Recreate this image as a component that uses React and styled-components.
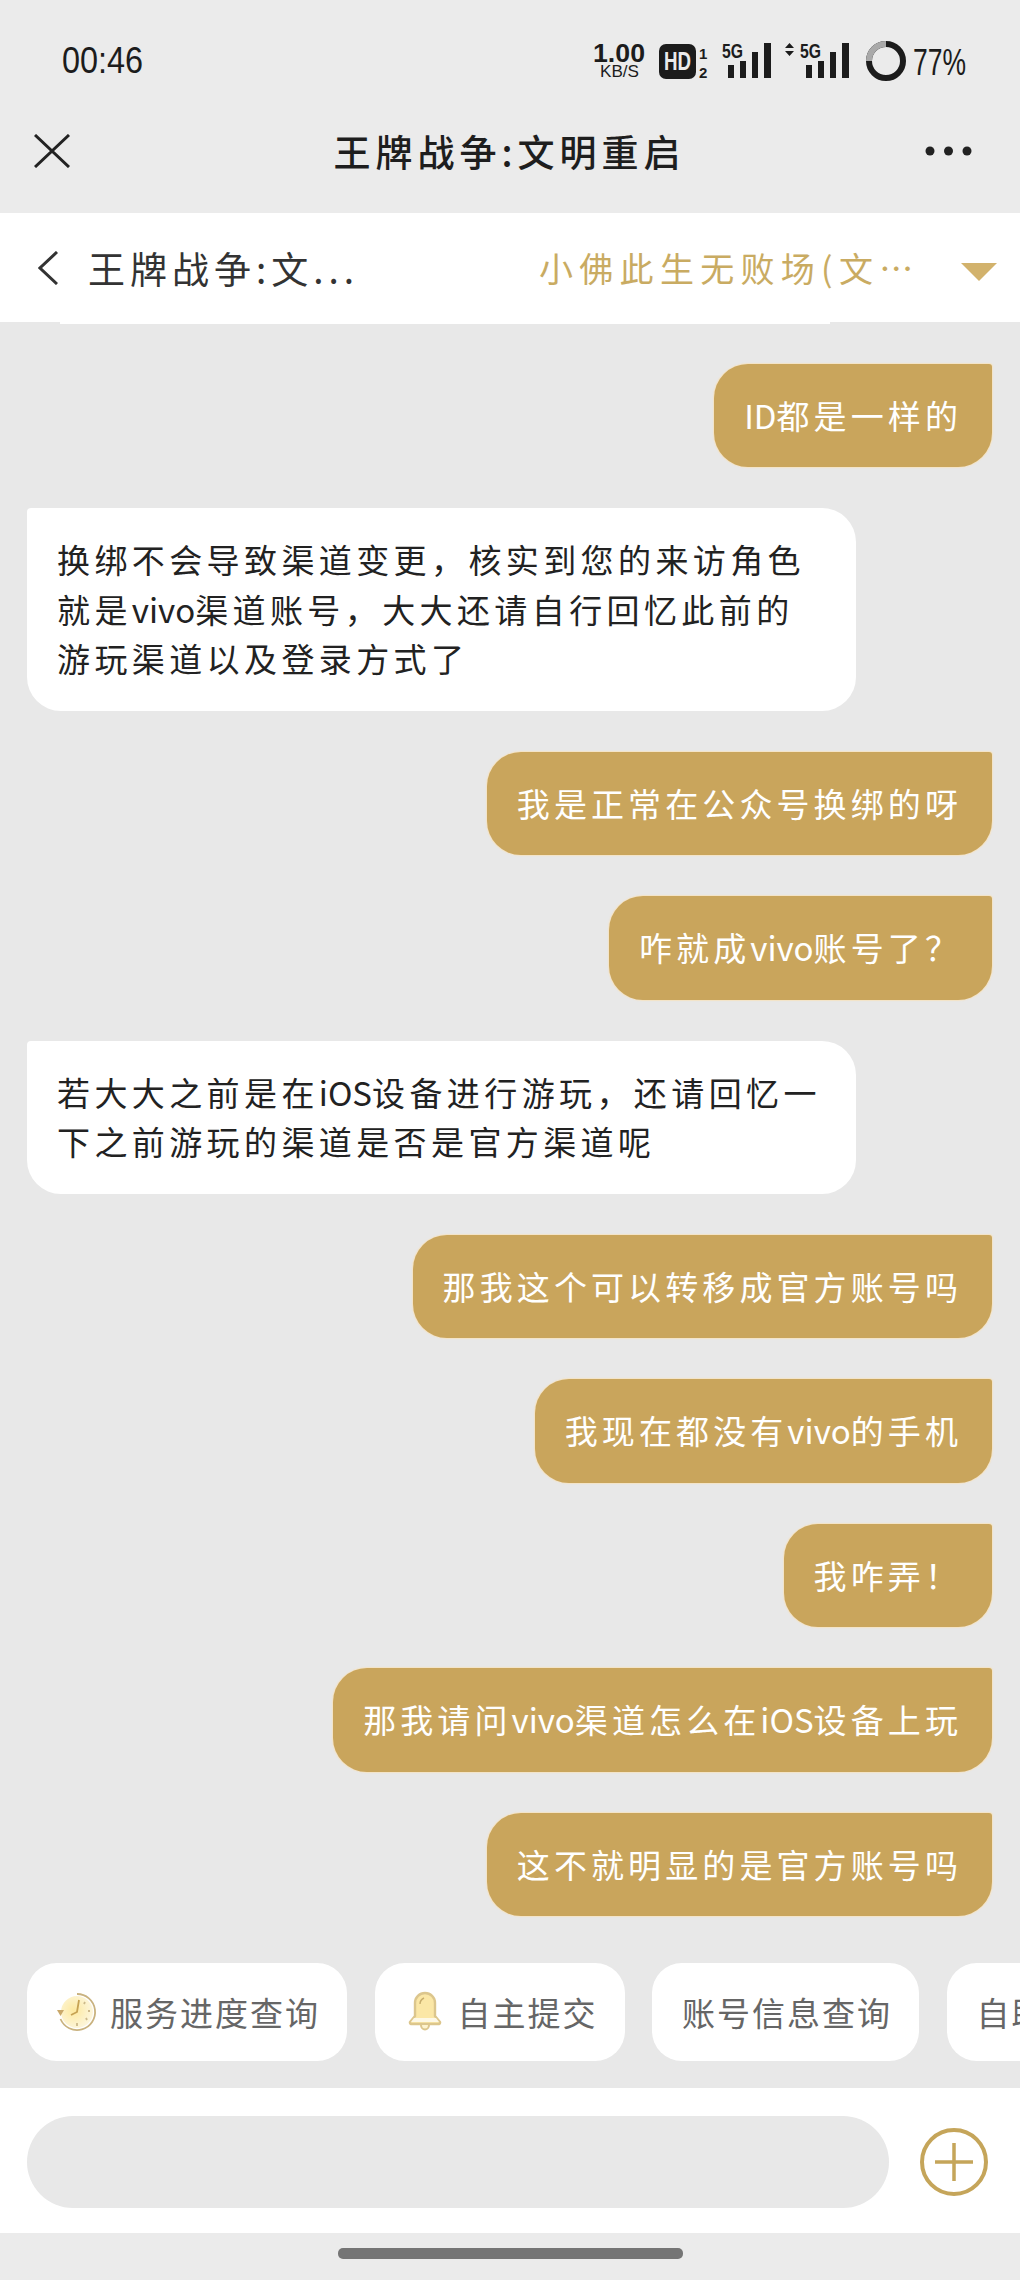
import styled, { createGlobalStyle } from "styled-components";

const GlobalStyle = createGlobalStyle`
  html, body {
    margin: 0;
    padding: 0;
    background: #e8e8e8;
  }
  body {
    font-family: "Noto Sans CJK SC", "Liberation Sans", sans-serif;
  }
`;

const Screen = styled.div`
  width: 1020px;
  height: 2280px;
  display: flex;
  flex-direction: column;
  overflow: hidden;
  background: #e8e8e8;
`;

const StatusBar = styled.div`
  flex: none;
  height: 100px;
  box-sizing: border-box;
  padding: 30px 28px 0 62px;
  display: flex;
  justify-content: space-between;
  align-items: flex-start;
  background: #ebebeb;
  color: #1c1c1c;
`;

const Time = styled.span`
  margin-top: 11px;
  font-family: "Liberation Sans", sans-serif;
  font-size: 36px;
  line-height: 40px;
  transform: scaleX(0.9);
  transform-origin: left center;
`;

const StatusIcons = styled.svg`
  display: block;
`;

const TitleBar = styled.div`
  flex: none;
  height: 113px;
  box-sizing: border-box;
  padding: 0 48px 12px 34px;
  display: flex;
  align-items: center;
  justify-content: space-between;
  background: #ebebeb;
`;

const Title = styled.h1`
  margin: 0 0 0 24px;
  font-size: 37px;
  font-weight: 500;
  letter-spacing: 5px;
  line-height: 50px;
  color: #1e1e1e;
`;

const PickerBar = styled.div`
  flex: none;
  height: 109px;
  box-sizing: border-box;
  padding: 0 22px 0 38px;
  display: flex;
  align-items: center;
  background: #fff;
`;

const GameName = styled.span`
  margin-left: 30px;
  width: 451px;
  font-size: 37px;
  letter-spacing: 5px;
  line-height: 50px;
  color: #333;
`;

const RoleName = styled.span`
  width: 380px;
  margin-right: 42px;
  font-size: 34px;
  letter-spacing: 6.3px;
  line-height: 50px;
  white-space: nowrap;
  color: #c9ab62;
`;

const Caret = styled.div`
  width: 0;
  height: 0;
  margin-top: 8px;
  border-left: 18px solid transparent;
  border-right: 18px solid transparent;
  border-top: 18px solid #d2b26c;
`;

// bottom edge of the bubble scrolled away under the header
const ScrolledEdge = styled.div`
  flex: none;
  height: 2px;
  margin: 0 190px 0 60px;
  background: #fff;
`;

const Messages = styled.div`
  flex: 1;
  min-height: 0;
  box-sizing: border-box;
  padding: 39.5px 28px 0 27px;
  display: flex;
  flex-direction: column;
  gap: 41px;
  background: #e8e8e8;
`;

const Bubble = styled.div`
  flex: none;
  align-self: ${(p) => (p.$mine ? "flex-end" : "flex-start")};
  box-sizing: border-box;
  width: ${(p) => (p.$mine ? "auto" : "829px")};
  padding: 27px 30px;
  font-size: 33px;
  letter-spacing: ${(p) => (p.$mine ? "4.1px" : "4.4px")};
  line-height: 49.5px;
  white-space: nowrap;
  color: ${(p) => (p.$mine ? "#fff" : "#222")};
  background: ${(p) => (p.$mine ? "#c9a55c" : "#fff")};
  border-radius: ${(p) => (p.$mine ? "34px 3px 34px 34px" : "4px 34px 34px 34px")};
  box-shadow: ${(p) => (p.$mine ? "0 0 1px 1px rgba(248, 226, 186, 0.75)" : "none")};
`;

const Line = styled.div``;

const Latin = styled.span`
  letter-spacing: 0;
`;

const ChipRow = styled.div`
  flex: none;
  height: 98px;
  margin-top: 46px;
  padding-left: 27px;
  display: flex;
  gap: 27.5px;
  overflow: hidden;
`;

const Chip = styled.div`
  flex: none;
  height: 98px;
  box-sizing: border-box;
  padding: 0 27px 0 ${(p) => p.$left || 30}px;
  display: flex;
  align-items: center;
  gap: ${(p) => p.$gap || 12}px;
  border-radius: 30px;
  background: #fff;
  font-size: 33px;
  letter-spacing: 2px;
  color: #666;
  white-space: nowrap;
`;

const InputBar = styled.div`
  flex: none;
  margin-top: 27px;
  height: 145px;
  box-sizing: border-box;
  padding: 28px 32px 0 27px;
  display: flex;
  justify-content: space-between;
  background: #fff;
`;

const InputPill = styled.div`
  width: 862px;
  height: 92px;
  border-radius: 46px;
  background: #e8e8e8;
`;

const PlusButton = styled.svg`
  display: block;
  margin-top: 12px;
`;

const HomeArea = styled.div`
  flex: none;
  height: 47px;
  display: flex;
  justify-content: center;
  padding-top: 15px;
  box-sizing: border-box;
  background: #ebebeb;
`;

const HomeBar = styled.div`
  width: 345px;
  height: 11px;
  border-radius: 5px;
  background: #757575;
`;

const StatusText = styled.text`
  font-family: "Liberation Sans", sans-serif;
  fill: #1c1c1c;
`;

const messages = [
  { mine: true, lines: ["ID都是一样的"] },
  { lines: ["换绑不会导致渠道变更，核实到您的来访角色", "就是vivo渠道账号，大大还请自行回忆此前的", "游玩渠道以及登录方式了"] },
  { mine: true, lines: ["我是正常在公众号换绑的呀"] },
  { mine: true, lines: ["咋就成vivo账号了？"] },
  { lines: ["若大大之前是在iOS设备进行游玩，还请回忆一", "下之前游玩的渠道是否是官方渠道呢"] },
  { mine: true, lines: ["那我这个可以转移成官方账号吗"] },
  { mine: true, lines: ["我现在都没有vivo的手机"] },
  { mine: true, lines: ["我咋弄！"] },
  { mine: true, lines: ["那我请问vivo渠道怎么在iOS设备上玩"] },
  { mine: true, lines: ["这不就明显的是官方账号吗"] },
];

// latin words sit tighter than the CJK around them
const withLatin = (text) =>
  text.split(/([A-Za-z]+)/).map((part, i) =>
    /^[A-Za-z]+$/.test(part) ? <Latin key={i}>{part}</Latin> : part
  );

const Signal = ({ x }) => (
  <>
    <rect x={x} y="24" width="6" height="13" fill="#1c1c1c" />
    <rect x={x + 12} y="20" width="6" height="17" fill="#1c1c1c" />
    <rect x={x + 24} y="11" width="6" height="26" fill="#1c1c1c" />
    <rect x={x + 36} y="2" width="7" height="35" fill="#1c1c1c" />
  </>
);

const StatusGroup = () => (
  <StatusIcons width="404" height="56" viewBox="588 30 404 56">
    <g transform="translate(593 41)">
      <StatusText x="0" y="21" fontSize="26" fontWeight="700" textLength="52" lengthAdjust="spacingAndGlyphs">1.00</StatusText>
      <StatusText x="7" y="36" fontSize="17" textLength="39" lengthAdjust="spacingAndGlyphs">KB/S</StatusText>
      <rect x="66" y="3" width="37" height="35" rx="7" fill="#1c1c1c" />
      <text x="71" y="29" fontSize="25" fontWeight="700" fill="#ebebeb" fontFamily="Liberation Sans" textLength="27" lengthAdjust="spacingAndGlyphs">HD</text>
      <StatusText x="106" y="18" fontSize="15" fontWeight="700">1</StatusText>
      <StatusText x="106" y="37" fontSize="15" fontWeight="700">2</StatusText>
      <StatusText x="129" y="17" fontSize="21" fontWeight="700" textLength="21" lengthAdjust="spacingAndGlyphs">5G</StatusText>
      <Signal x={135} />
      <path d="M192 7l4.5-5 4.5 5zM192 10h9l-4.5 5z" fill="#1c1c1c" />
      <StatusText x="207" y="17" fontSize="21" fontWeight="700" textLength="21" lengthAdjust="spacingAndGlyphs">5G</StatusText>
      <Signal x={213} />
      <circle cx="293" cy="20" r="17" fill="none" stroke="#1c1c1c" strokeWidth="6" />
      <path d="M276 20A17 17 0 0 1 293 3" fill="none" stroke="#a9a9a9" strokeWidth="6" />
      <StatusText x="320" y="34" fontSize="36" textLength="53" lengthAdjust="spacingAndGlyphs">77%</StatusText>
    </g>
  </StatusIcons>
);

const ClockIcon = () => (
  <svg width="42" height="42" viewBox="0 0 42 42">
    <defs>
      <radialGradient id="clockFill" cx="0.4" cy="0.45" r="0.6">
        <stop offset="0" stopColor="#fde9a0" />
        <stop offset="1" stopColor="#fdf6dc" />
      </radialGradient>
    </defs>
    <circle cx="21" cy="21" r="16" fill="url(#clockFill)" />
    <path d="M21 3a18 18 0 1 1-16.5 25" fill="none" stroke="#c9b27f" strokeWidth="1.8" />
    <path d="M1 19l3.5 6 3.5-6z" fill="#c9a86a" />
    <path d="M23 9l-2 12-6 3" fill="none" stroke="#c6a253" strokeWidth="1.8" />
    <path d="M29 11l-1 2M34 20h-2M31 29l-1-2M21 35v-3" stroke="#cdb98a" strokeWidth="1.8" />
  </svg>
);

const BellIcon = () => (
  <svg width="36" height="42" viewBox="0 0 36 42">
    <path d="M8 12a10 10 0 0 1 20 0v13l5 6a1.5 1.5 0 0 1-1 2H4a1.5 1.5 0 0 1-1-2l5-6z" fill="#fbe7a6" stroke="#dcc68d" strokeWidth="2.4" />
    <path d="M7 27h22l3 4H4z" fill="#fdf8e6" />
    <path d="M13 13c0-3 2-5 4-6" fill="none" stroke="#c7ad6c" strokeWidth="1.4" />
    <path d="M14 34a4 4.5 0 0 0 8 0" fill="#fdf3cf" stroke="#dcc68d" strokeWidth="2" />
  </svg>
);

const App = () => (
  <Screen>
    <GlobalStyle />
    <StatusBar>
      <Time>00:46</Time>
      <StatusGroup />
    </StatusBar>
    <TitleBar>
      <svg width="36" height="34" viewBox="0 0 36 34">
        <path d="M1 1l34 32M35 1L1 33" stroke="#222" strokeWidth="3" fill="none" />
      </svg>
      <Title>王牌战争:文明重启</Title>
      <svg width="47" height="10" viewBox="0 0 47 10">
        <circle cx="5" cy="5" r="4.5" fill="#222" />
        <circle cx="23.5" cy="5" r="4.5" fill="#222" />
        <circle cx="42" cy="5" r="4.5" fill="#222" />
      </svg>
    </TitleBar>
    <PickerBar>
      <svg width="20" height="34" viewBox="0 0 20 34">
        <path d="M19 1L2 17l17 16" stroke="#333" strokeWidth="3" fill="none" />
      </svg>
      <GameName>王牌战争:文...</GameName>
      <RoleName>小佛此生无败场(文…</RoleName>
      <Caret />
    </PickerBar>
    <ScrolledEdge />
    <Messages>
      {messages.map((m) => (
        <Bubble key={m.lines[0]} $mine={m.mine}>
          {m.lines.map((line) => (
            <Line key={line}>{withLatin(line)}</Line>
          ))}
        </Bubble>
      ))}
    </Messages>
    <ChipRow>
      <Chip $left={29} $gap={12}><ClockIcon />服务进度查询</Chip>
      <Chip $left={32} $gap={15}><BellIcon />自主提交</Chip>
      <Chip>账号信息查询</Chip>
      <Chip>自助服务</Chip>
    </ChipRow>
    <InputBar>
      <InputPill />
      <PlusButton width="68" height="68" viewBox="0 0 68 68">
        <circle cx="34" cy="34" r="32" fill="none" stroke="#c5a55a" strokeWidth="4" />
        <path d="M15 34h38M34 15v38" stroke="#c5a55a" strokeWidth="3.5" />
      </PlusButton>
    </InputBar>
    <HomeArea>
      <HomeBar />
    </HomeArea>
  </Screen>
);

export default App;
